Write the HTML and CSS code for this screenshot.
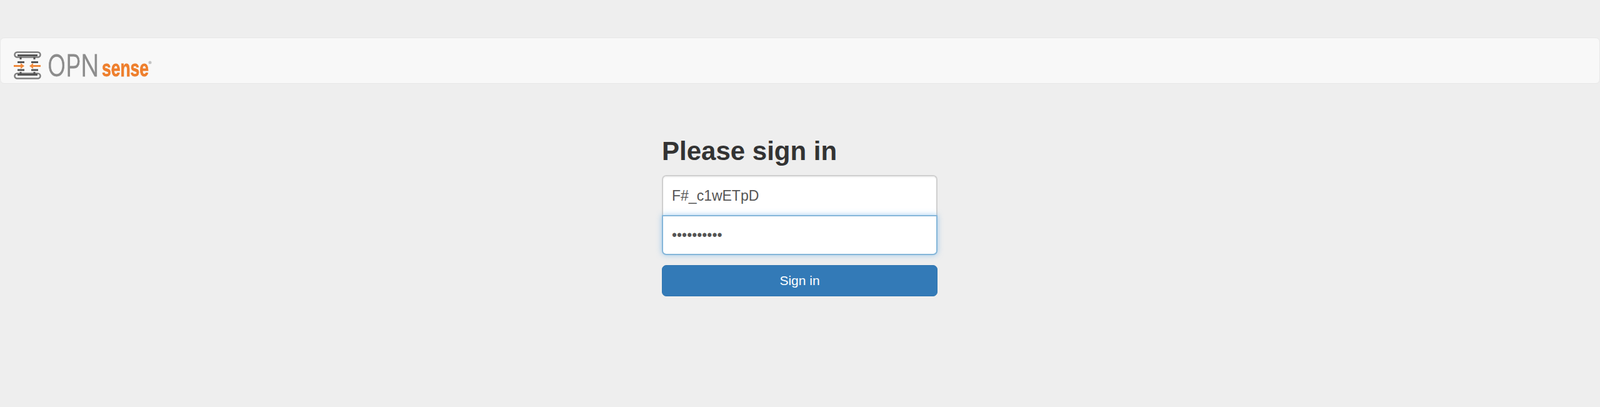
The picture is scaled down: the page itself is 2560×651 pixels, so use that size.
FILE: index.html
```html
<!DOCTYPE html>
<html lang="en">
<head>
    <meta charset="UTF-8">
    <meta name="viewport" content="width=device-width, initial-scale=1.0">
    <title>Login | OPNsense</title>
    <link rel="stylesheet" href="styles.css">
</head>
<body>
    <nav class="navbar">
        <svg class="logo" viewBox="0 0 230 50" width="230" height="50" role="img" aria-label="OPNsense">
            <g class="logo-outline">
                <rect x="3.5" y="3.5" width="41" height="8" rx="4"/>
                <rect x="3.5" y="37.5" width="41" height="8" rx="4"/>
            </g>
            <g class="logo-bars">
                <path d="M8 8.5h32M8 39.500h32"/>
                <path d="M8 19.500h11M30 19.500h11M8 32h11M30 32h11"/>
                <path d="M13 11v4M35 11v4M13 35v3M35 35v3"/>
            </g>
            <g class="logo-arrows">
                <path d="M2 25.500h14M30 25.500h15"/>
                <path d="M13 21l6 4.500-6 4.500zM33 21l-6 4.500 6 4.500z"/>
            </g>
            <text class="logo-opn" transform="translate(56 42) scale(0.8 1)">OPN</text>
            <text class="logo-sense" transform="translate(143 42) scale(0.735 1)">sense</text>
            <circle class="logo-mark" cx="220" cy="20" r="2.500"/>
        </svg>
    </nav>

    <main class="login">
        <form class="login-form">
            <h2 class="login-title">Please sign in</h2>
            <input class="login-input login-user" type="text" value="F#_c1wETpD">
            <input class="login-input login-pass" type="password" value="1234567890">
            <button class="login-btn" type="button">Sign in</button>
        </form>
    </main>
</body>
</html>
```

FILE: styles.css
```css
html, body {
    height: 100%;
}
body {
    margin: 0;
    padding-top: 60px;
    box-sizing: border-box;
    background-color: #eeeeee;
    font-family: "Liberation Sans", Arial, sans-serif;
    color: #333333;
    overflow: hidden;
}
.navbar {
    height: 74px;
    box-sizing: border-box;
    padding: 19px 0 0 19px;
    background-color: #f8f8f8;
    border: 1px solid #e7e7e7;
    border-radius: 7px;
}
.logo {
    display: block;
    overflow: visible;
    filter: blur(0.6px);
}
.logo-outline rect {
    fill: none;
    stroke: #7d7d7d;
    stroke-width: 2.5;
}
.logo-bars path {
    fill: none;
    stroke: #555555;
    stroke-width: 3;
}
.logo-arrows path:first-child {
    fill: none;
    stroke: #f08a3c;
    stroke-width: 3;
}
.logo-arrows path:last-child {
    fill: #f08a3c;
}
.logo-opn {
    font-family: Inter, "Liberation Sans", sans-serif;
    font-size: 48px;
    font-weight: 300;
    fill: #8c8c8c;
    stroke: #8c8c8c;
    stroke-width: 1;
}
.logo-sense {
    font-family: "Liberation Sans", Arial, sans-serif;
    font-size: 36px;
    font-weight: 700;
    fill: #ee7f2d;
    stroke: #ee7f2d;
    stroke-width: 0.8;
}
.logo-mark {
    fill: #c4c4c4;
}
.login {
    display: flex;
    justify-content: center;
    padding-top: 83px;
}
.login-form {
    width: 441px;
    margin-left: -1px;
}
.login-title {
    margin: 0 0 13px;
    font-size: 42px;
    line-height: 50px;
    font-weight: 700;
}
.login-input {
    display: block;
    width: 100%;
    height: 64px;
    box-sizing: border-box;
    padding: 0 14px;
    background-color: #ffffff;
    border: 2px solid #cfcfcf;
    font-family: inherit;
    font-size: 23px;
    color: #555555;
    outline: none;
}
.login-user {
    border-radius: 7px 7px 0 0;
    border-bottom: none;
    box-shadow: inset 0 2px 2px rgba(0, 0, 0, 0.05);
}
.login-pass {
    position: relative;
    border-color: #85b6d9;
    border-radius: 0 0 7px 7px;
    box-shadow: 0 0 10px rgba(102, 175, 233, 0.6);
}
.login-btn {
    display: block;
    width: 100%;
    height: 50px;
    margin-top: 16px;
    background-color: #337ab7;
    border: 1px solid #3176b0;
    border-radius: 7px;
    font-family: inherit;
    font-size: 21px;
    color: #ffffff;
    cursor: pointer;
}
```
